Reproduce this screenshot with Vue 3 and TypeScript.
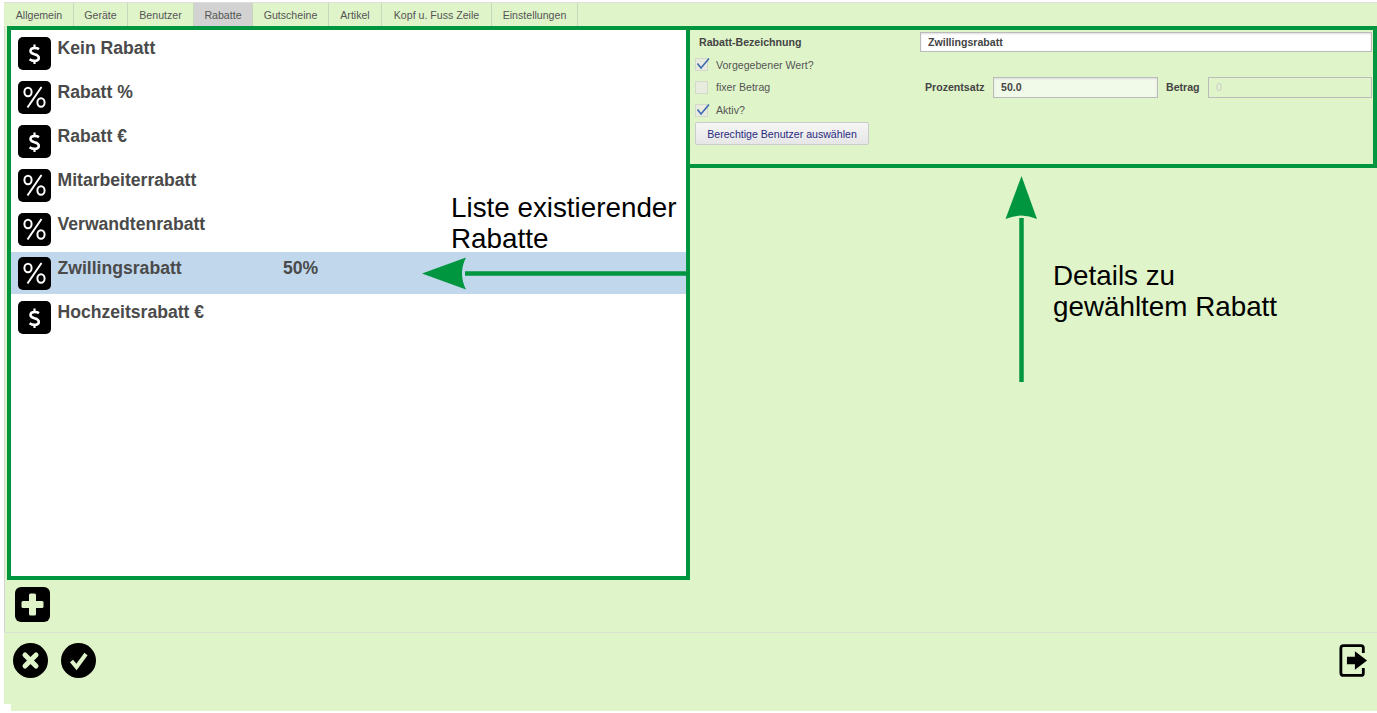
<script setup lang="ts">
interface Row { name: string; kind: 'dollar' | 'percent'; value?: string; selected?: boolean }
const tabs: string[] = ['Allgemein', 'Geräte', 'Benutzer', 'Rabatte', 'Gutscheine', 'Artikel', 'Kopf u. Fuss Zeile', 'Einstellungen']
const rows: Row[] = [
  { name: 'Kein Rabatt', kind: 'dollar' },
  { name: 'Rabatt %', kind: 'percent' },
  { name: 'Rabatt €', kind: 'dollar' },
  { name: 'Mitarbeiterrabatt', kind: 'percent' },
  { name: 'Verwandtenrabatt', kind: 'percent' },
  { name: 'Zwillingsrabatt', kind: 'percent', value: '50%', selected: true },
  { name: 'Hochzeitsrabatt €', kind: 'dollar' },
]
</script>

<template>
  <div class="page">
    <nav class="tabs">
      <span v-for="t in tabs" :key="t" class="tab" :class="{ active: t === 'Rabatte' }">{{ t }}</span>
    </nav>

    <div class="main">
      <div class="panels">
        <section class="list">
          <div v-for="r in rows" :key="r.name" class="row" :class="{ selected: r.selected }">
            <span class="badge">
              <svg v-if="r.kind === 'dollar'" width="33" height="33" viewBox="0 0 33 33">
                <path d="M21 12.200c-1.200-.8-2.700-1.200-4.300-1.200-2.500 0-4.200 1.100-4.200 3 0 1.700 1.200 2.500 4 3.300 2.900.8 4.300 1.700 4.300 3.500 0 2-1.800 3.100-4.300 3.100-1.800 0-3.600-.6-4.900-1.600" fill="none" stroke="#fff" stroke-width="2.600" />
                <path d="M16.500 7.500v3.500M16.500 23.500v3.500" stroke="#fff" stroke-width="2.200" />
              </svg>
              <svg v-else width="33" height="33" viewBox="0 0 33 33">
                <ellipse cx="10" cy="11" rx="3.600" ry="4.300" fill="none" stroke="#fff" stroke-width="2" />
                <ellipse cx="23" cy="21.500" rx="3.600" ry="4.300" fill="none" stroke="#fff" stroke-width="2" />
                <path d="M23.500 6 9.500 26.500" stroke="#fff" stroke-width="2" />
              </svg>
            </span>
            <span class="name">{{ r.name }}</span>
            <span v-if="r.value" class="val">{{ r.value }}</span>
          </div>
        </section>

        <section class="details">
          <div class="line first">
            <label class="strong title">Rabatt-Bezeichnung</label>
            <input class="field name-field" value="Zwillingsrabatt" />
          </div>
          <div class="line check"><span class="cb"><svg width="15" height="14" viewBox="0 0 15 14"><path d="M2.500 6.500 6 11 14 1.500" fill="none" stroke="#3f6bb0" stroke-width="1.600" /></svg></span>Vorgegebener Wert?</div>
          <div class="line check amount">
            <span class="cb"></span><span class="fix">fixer Betrag</span>
            <label class="strong pz">Prozentsatz</label>
            <input class="field pct-field" value="50.0" />
            <label class="strong bt">Betrag</label>
            <input class="field bt-field" value="0" disabled />
          </div>
          <div class="line check"><span class="cb"><svg width="15" height="14" viewBox="0 0 15 14"><path d="M2.500 6.500 6 11 14 1.500" fill="none" stroke="#3f6bb0" stroke-width="1.600" /></svg></span><span class="lift">Aktiv?</span></div>
          <button class="users" type="button">Berechtige Benutzer auswählen</button>
        </section>
      </div>

      <div class="add-row">
        <span class="add">
          <svg width="35" height="35" viewBox="0 0 35 35"><rect x="6.500" y="14" width="22" height="7" rx="1.500" fill="#dff4c9" /><rect x="14" y="6.500" width="7" height="22" rx="1.500" fill="#dff4c9" /></svg>
        </span>
      </div>
    </div>

    <footer class="foot">
      <div class="round-btns">
        <svg width="35" height="35" viewBox="0 0 35 35"><circle cx="17.500" cy="17.500" r="17.500" fill="#000" /><path d="M12 12l11 11M23 12 12 23" stroke="#dff4c9" stroke-width="5" stroke-linecap="round" /></svg>
        <svg width="35" height="35" viewBox="0 0 35 35"><circle cx="17.500" cy="17.500" r="17.500" fill="#000" /><path d="M10.500 18l5 6L25 11" fill="none" stroke="#dff4c9" stroke-width="4" /></svg>
      </div>
      <svg class="exit" width="29" height="35" viewBox="0 0 31 36">
        <path d="M26 10V4.500Q26 2 23.500 2H5Q2 2 2 5V31Q2 34 5 34H23.500Q26 34 26 31.500V26" fill="none" stroke="#000" stroke-width="3" />
        <path d="M8.500 14H17V8L30 18 17 28V22H8.500Z" fill="#000" />
      </svg>
    </footer>

    <div class="note note-list">Liste existierender<br />Rabatte</div>
    <div class="note note-detail">Details zu<br />gewähltem Rabatt</div>
    <svg class="arrows" width="1377" height="713" viewBox="0 0 1377 713">
      <path d="M686 273.500H465" stroke="#009640" stroke-width="4.500" />
      <path d="M422 273.500 466 257.500Q458 273.500 466 289.500Z" fill="#009640" />
      <path d="M1021.500 382V218" stroke="#009640" stroke-width="4.500" />
      <path d="M1021.500 176 1037 219Q1021.500 212 1005.500 219Z" fill="#009640" />
    </svg>
    <span class="notch"></span>
  </div>
</template>

<style>
html, body { margin: 0; background: #fff; }
</style>

<style scoped>
.page {
  position: relative;
  width: 1377px;
  height: 713px;
  overflow: hidden;
  box-sizing: border-box;
  padding: 2px 0 2px 4px;
  display: flex;
  flex-direction: column;
  font-family: "Liberation Sans", Arial, sans-serif;
  color: #444;
}
.tabs {
  display: grid;
  grid-template-columns: 69px 54px 66px 59px 76px 53px 110px 86px;
  justify-content: start;
  height: 24px;
  box-sizing: border-box;
  padding-left: 1px;
  background: #dff4c9;
  border-top: 1px solid #ddd;
  font-size: 10.600px;
}
.tab {
  padding-top: 1px;
  line-height: 22px;
  text-align: center;
  white-space: nowrap;
  border-right: 1px solid #c9d8bc;
  color: #555;
}
.active {
  background: #d2d2d2;
}
.main {
  height: 607px;
  box-sizing: border-box;
  background: #dff4c9;
  border-left: 1px solid #d4d4d4;
  border-bottom: 1px solid #d9e3d0;
  display: flex;
  flex-direction: column;
}
.panels { display: flex; align-items: flex-start; margin-left: 2px; }
.list {
  width: 683px;
  height: 554px;
  flex: none;
  box-sizing: border-box;
  border: 4px solid #009640;
  background: #fff;
  padding-top: 3px;
}
.row {
  height: 44px;
  box-sizing: border-box;
  padding: 4px 0 0 7px;
  display: flex;
  align-items: flex-start;
  color: #4a4a4a;
}
.selected { background: #c1d7ec; height: 42px; margin: -1px 0 3px; padding-top: 5px; }
.badge {
  width: 33px;
  height: 33px;
  border-radius: 5px;
  background: #000;
  display: flex;
  align-items: center;
  justify-content: center;
  flex: none;
}
.name { margin-left: 6.500px; width: 225.500px; font-size: 17.600px; font-weight: 700; line-height: 20px; margin-top: 1px; }
.val { font-size: 17.600px; font-weight: 700; line-height: 20px; margin-top: 1px; }
.details {
  width: 691px;
  height: 142px;
  margin-left: -4px;
  flex: none;
  box-sizing: border-box;
  border: 4px solid #009640;
  padding: 1px 0 0 4px;
  font-size: 10.600px;
}
.line { display: flex; align-items: center; }
.first { height: 22px; }
.strong { font-weight: 700; color: #444; }
.title { width: 221px; margin-left: 5px; }
.field {
  box-sizing: border-box;
  font: 700 10.600px "Liberation Sans", Arial, sans-serif;
  color: #444;
  border: 1px solid #bbb;
  box-shadow: inset 0 1px 2px #ddd;
  padding: 0 7px;
  outline: none;
  border-radius: 0;
}
.name-field { width: 452px; height: 20px; background: #fff; }
.check { height: 23px; color: #555; }
.cb {
  box-sizing: border-box;
  width: 13px;
  height: 13px;
  margin: 0 8px 0 1px;
  background: #e8ecde;
  border: 1px solid #d5d9cc;
  flex: none;
  position: relative;
}
.cb svg { position: absolute; left: -1px; top: -2px; }
.fix { width: 209px; padding-bottom: 1px; }
.lift { padding-bottom: 1px; }
.amount { height: 23px; }
.pz { width: 68px; padding-bottom: 1px; }
.pct-field { width: 165px; height: 21px; padding-bottom: 2px; background: #f1f9e9; }
.bt { margin-left: 8px; width: 42px; padding-bottom: 1px; }
.bt-field { width: 164px; height: 21px; padding-bottom: 2px; background: transparent; color: #ccc; font-weight: 400; box-shadow: none; }
.users {
  display: block;
  width: 174px;
  height: 23px;
  margin: 0 0 0 1px;
  padding: 0;
  box-sizing: border-box;
  border: 1px solid #ccc;
  border-radius: 2px;
  background: linear-gradient(#f6f6f6, #e6e6e6);
  color: #2a2a80;
  font: 10.600px "Liberation Sans", Arial, sans-serif;
}
.add-row { padding: 7px 0 0 10px; }
.add {
  display: block;
  width: 35px;
  height: 35px;
  border-radius: 6px;
  background: #000;
}
.add svg, .round-btns svg, .exit { display: block; }
.foot {
  flex: 1;
  background: #dff4c9;
  display: flex;
  justify-content: space-between;
  align-items: flex-start;
  padding: 10px 0 0 9px;
}
.round-btns { display: flex; gap: 13px; }
.exit { margin-right: 9px; }
.note {
  position: absolute;
  font-size: 27.800px;
  line-height: 31px;
  color: #000;
}
.note-list { left: 451px; top: 192px; }
.note-detail { left: 1053px; top: 260px; }
.arrows { position: absolute; left: 0; top: 0; pointer-events: none; }
.notch { position: absolute; left: 4px; top: 704px; width: 7px; height: 9px; background: #fff; }
</style>
